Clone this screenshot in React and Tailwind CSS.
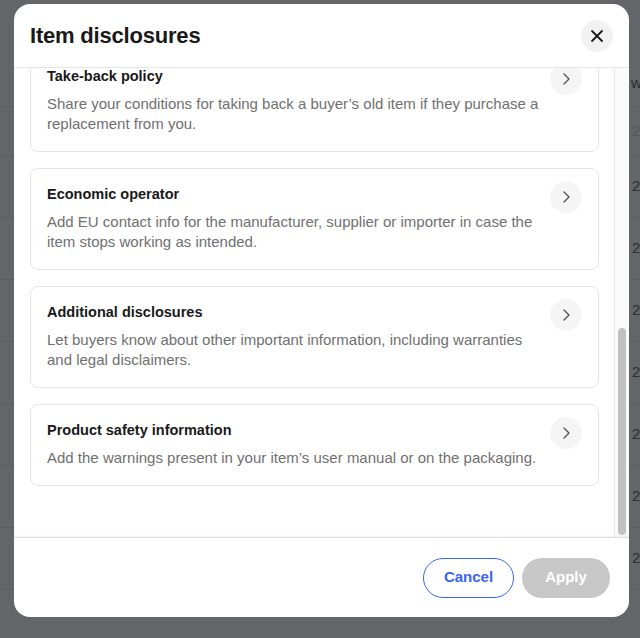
import React from "react";

const sections = [
  {
    title: "Take-back policy",
    text: "Share your conditions for taking back a buyer’s old item if they purchase a replacement from you.",
  },
  {
    title: "Economic operator",
    text: "Add EU contact info for the manufacturer, supplier or importer in case the item stops working as intended.",
  },
  {
    title: "Additional disclosures",
    text: "Let buyers know about other important information, including warranties and legal disclaimers.",
  },
  {
    title: "Product safety information",
    text: "Add the warnings present in your item’s user manual or on the packaging.",
  },
];

function Chevron() {
  return (
    <svg width="16" height="16" viewBox="0 0 16 16" fill="none">
      <path d="M6 3l5 5-5 5" stroke="#555" strokeWidth="1.4" strokeLinecap="round" strokeLinejoin="round" />
    </svg>
  );
}

function Card({ title, text }) {
  return (
    <div className="flex items-start gap-1 border border-[#e5e5e5] rounded-lg pl-4 pr-4 pt-[15px] pb-[17px]">
      <div className="flex-1 flex flex-col gap-2">
        <p className="text-[14.5px] leading-5 font-bold text-[#191919]">{title}</p>
        <p className="text-[15px] leading-5 text-[#707070]">{text}</p>
      </div>
      <button className="w-8 h-8 shrink-0 -mt-[3px] rounded-full bg-[#f5f5f5] flex items-center justify-center">
        <Chevron />
      </button>
    </div>
  );
}

export default function App() {
  const rows = [0, 1, 2, 3, 4, 5, 6];

  return (
    <div
      className="relative w-[640px] h-[638px] overflow-hidden bg-[#636569]"
      style={{ fontFamily: '"Liberation Sans", Arial, sans-serif' }}
    >
      {/* dimmed page behind the dialog */}
      <div className="flex flex-col text-[15px] text-[#2e2f31]">
        <div className="h-[107px] border-b border-[#5a5c60] flex items-end pb-3 pl-[631px]">w</div>
        <div className="h-[49px] border-b border-[#5a5c60] flex items-center pl-[632px] text-[#55575a]">2</div>
        {rows.map((r) => (
          <div key={r} className="h-[62px] border-b border-[#5a5c60] flex items-center pl-[632px]">
            2
          </div>
        ))}
      </div>

      {/* dialog */}
      <div className="absolute left-[14px] top-[4px] w-[615px] h-[613px] bg-white rounded-2xl flex flex-col overflow-hidden">
        <div className="h-[64px] shrink-0 border-b border-[#e5e5e5] flex items-center justify-between pl-4 pr-4">
          <h2 className="text-[22px] font-bold text-[#191919] tracking-[-0.2px]">Item disclosures</h2>
          <button className="w-8 h-8 rounded-full bg-[#f2f2f2] flex items-center justify-center">
            <svg width="14" height="14" viewBox="0 0 14 14" fill="none">
              <path d="M2 2l10 10M12 2L2 12" stroke="#191919" strokeWidth="1.8" strokeLinecap="round" />
            </svg>
          </button>
        </div>

        <div className="h-[469px] shrink-0 flex">
          <div className="flex-1 overflow-hidden pl-4 pr-[15px]">
            <div className="flex flex-col gap-4 -mt-[18px]">
              {sections.map((s) => (
                <Card key={s.title} title={s.title} text={s.text} />
              ))}
            </div>
          </div>
          <div className="w-[15px] bg-[#fafafa] border-l border-[#e8e8e8] flex justify-center pt-[260px]">
            <div className="w-2 h-[207px] rounded-full bg-[#c1c1c1]" />
          </div>
        </div>

        <div className="flex-1 border-t border-[#e0e0e0] shadow-[0_-1px_2px_rgba(0,0,0,0.06)] flex items-center justify-end gap-2 pr-[19px]">
          <button className="w-[91px] h-10 rounded-full border border-[#3665f3] text-[#3665f3] text-[15px] font-bold">
            Cancel
          </button>
          <button className="w-[88px] h-10 rounded-full bg-[#c7c7c7] text-white text-[15px] font-bold">
            Apply
          </button>
        </div>
      </div>
    </div>
  );
}
